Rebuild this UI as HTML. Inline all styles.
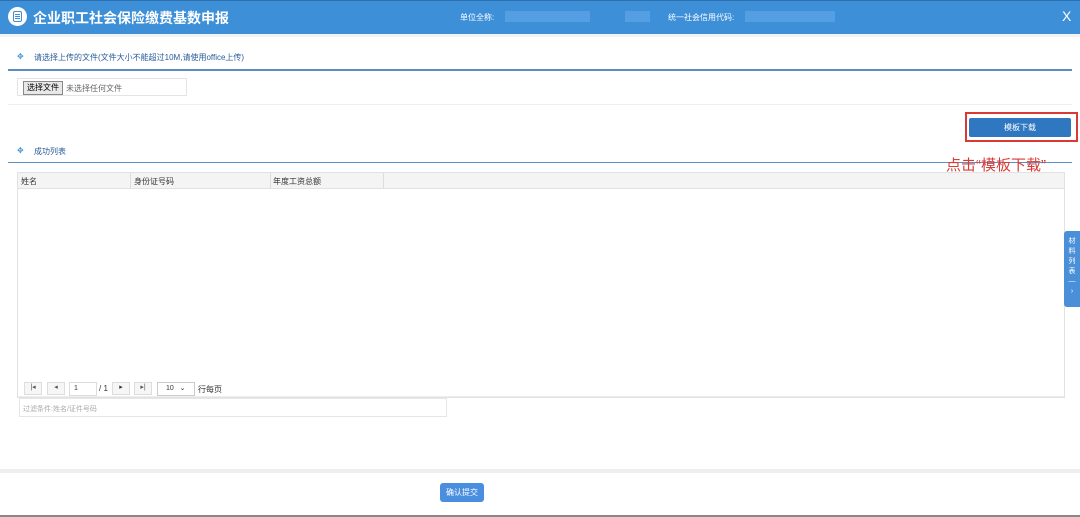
<!DOCTYPE html>
<html><head><meta charset="utf-8"><style>
*{margin:0;padding:0;box-sizing:border-box}
body{width:1080px;height:517px;overflow:hidden;background:#fff;font-family:"Liberation Sans","Noto Sans CJK SC",sans-serif;position:relative;font-size:8px;color:#333}
.a{position:absolute}
</style></head><body>
<div class="a" style="left:0;top:0;width:1080px;height:34px;background:#3d8fd8;border-top:1px solid #2f6fae"></div>
<div class="a" style="left:8px;top:7px;width:19px;height:19px;border-radius:50%;background:#fff"></div>
<div class="a" style="left:13px;top:11px;width:9px;height:11px;border:1.5px solid #3d8fd8;border-radius:2px"></div>
<div class="a" style="left:15px;top:14px;width:5px;height:1px;background:#3d8fd8;box-shadow:0 2px 0 #3d8fd8,0 4px 0 #3d8fd8"></div>
<div class="a" style="left:33px;top:8px;color:#fff;font-size:14px;font-weight:bold">企业职工社会保险缴费基数申报</div>
<div class="a" style="left:460px;top:12px;color:#fff;font-size:8px">单位全称:</div>
<div class="a" style="left:505px;top:11px;width:85px;height:11px;background:#5aa3e6;opacity:.8"></div>
<div class="a" style="left:625px;top:11px;width:25px;height:11px;background:#5aa3e6;opacity:.8"></div>
<div class="a" style="left:668px;top:12px;color:#fff;font-size:8px">统一社会信用代码:</div>
<div class="a" style="left:745px;top:11px;width:90px;height:11px;background:#5aa3e6;opacity:.8"></div>
<div class="a" style="left:1062px;top:8px;color:#fff;font-size:14px">X</div>
<div class="a" style="left:0;top:34px;width:1080px;height:3px;background:#f3f3f3"></div>

<div class="a" style="left:17px;top:52px;color:#3d8fd8;font-size:8px">✥</div>
<div class="a" style="left:34px;top:52px;color:#2a5c9a;font-size:8px">请选择上传的文件(文件大小不能超过10M,请使用office上传)</div>
<div class="a" style="left:8px;top:69px;width:1064px;height:2px;background:#5b8fc4"></div>
<div class="a" style="left:17px;top:78px;width:170px;height:18px;border:1px solid #e4e4e4"></div>
<div class="a" style="left:23px;top:81px;width:40px;height:14px;border:1px solid #888;background:#e8e8e8;font-size:8px;line-height:12px;text-align:center;color:#000">选择文件</div>
<div class="a" style="left:66px;top:83px;font-size:8px;color:#666">未选择任何文件</div>
<div class="a" style="left:8px;top:104px;width:1064px;height:1px;background:#eee"></div>

<div class="a" style="left:965px;top:112px;width:113px;height:30px;border:2px solid #d93a36"></div>
<div class="a" style="left:969px;top:118px;width:102px;height:19px;background:#2f78c1;border-radius:2px;color:#fff;font-size:8px;line-height:19px;text-align:center">模板下载</div>

<div class="a" style="left:17px;top:146px;color:#3d8fd8;font-size:8px">✥</div>
<div class="a" style="left:34px;top:146px;color:#2a5c9a;font-size:8px">成功列表</div>
<div class="a" style="left:8px;top:162px;width:1064px;height:1px;background:#5b8fc4"></div>
<div class="a" style="left:946px;top:154px;color:#d93a36;font-size:15px">点击“模板下载”</div>

<div class="a" style="left:17px;top:172px;width:1048px;height:226px;border:1px solid #e2e2e2"></div>
<div class="a" style="left:18px;top:173px;width:1046px;height:16px;background:#f4f4f4;border-bottom:1px solid #e2e2e2"></div>
<div class="a" style="left:130px;top:173px;width:1px;height:16px;background:#ddd"></div>
<div class="a" style="left:270px;top:173px;width:1px;height:16px;background:#ddd"></div>
<div class="a" style="left:383px;top:173px;width:1px;height:16px;background:#ddd"></div>
<div class="a" style="left:21px;top:176px;font-size:8px">姓名</div>
<div class="a" style="left:134px;top:176px;font-size:8px">身份证号码</div>
<div class="a" style="left:273px;top:176px;font-size:8px">年度工资总额</div>
<div class="a" style="left:18px;top:396px;width:1046px;height:1px;background:#eee"></div>

<div class="a" style="left:24px;top:382px;width:18px;height:13px;border:1px solid #ddd;background:#f6f6f6;font-size:7px;text-align:center;color:#555">|◂</div>
<div class="a" style="left:47px;top:382px;width:18px;height:13px;border:1px solid #ddd;background:#f6f6f6;font-size:7px;text-align:center;color:#555">◂</div>
<div class="a" style="left:69px;top:382px;width:28px;height:14px;border:1px solid #ddd;font-size:7px;padding-left:4px;line-height:12px">1</div>
<div class="a" style="left:99px;top:384px;font-size:8px">/ 1</div>
<div class="a" style="left:112px;top:382px;width:18px;height:13px;border:1px solid #ddd;background:#f6f6f6;font-size:7px;text-align:center;color:#333">▸</div>
<div class="a" style="left:134px;top:382px;width:18px;height:13px;border:1px solid #ddd;background:#f6f6f6;font-size:7px;text-align:center;color:#555">▸|</div>
<div class="a" style="left:157px;top:382px;width:38px;height:14px;border:1px solid #ccc;font-size:7px;padding-left:8px;line-height:12px">10 &nbsp; ⌄</div>
<div class="a" style="left:198px;top:384px;font-size:8px">行每页</div>
<div class="a" style="left:19px;top:398px;width:428px;height:19px;border:1px solid #e6e6e6"></div>
<div class="a" style="left:23px;top:404px;font-size:7px;color:#aaa">过滤条件:姓名/证件号码</div>

<div class="a" style="left:1064px;top:231px;width:16px;height:76px;background:#4a90d9;border-radius:3px 0 0 3px;color:#fff;font-size:7px;text-align:center;line-height:10px;padding-top:6px">材<br>料<br>列<br>表<br>—<br>›</div>

<div class="a" style="left:0;top:469px;width:1080px;height:4px;background:#eee"></div>
<div class="a" style="left:440px;top:483px;width:44px;height:19px;background:#4a8ee0;border-radius:3px;color:#fff;font-size:8px;line-height:19px;text-align:center">确认提交</div>
<div class="a" style="left:0;top:515px;width:1080px;height:2px;background:#888"></div>
</body></html>
